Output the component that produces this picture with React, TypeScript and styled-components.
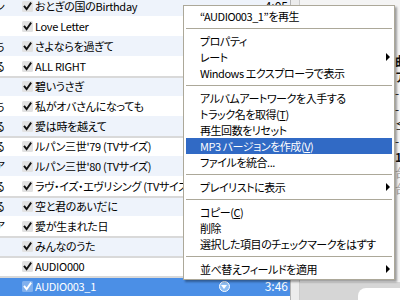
import React from "react";
import styled, { createGlobalStyle, css } from "styled-components";

const GlobalStyle = createGlobalStyle`
  html, body {
    margin: 0;
    padding: 0;
  }
  body {
    width: 400px;
    height: 300px;
    overflow: hidden;
    background: #ffffff;
    font-family: "Noto Sans CJK JP", "Liberation Sans", sans-serif;
  }
`;

const Window = styled.div`
  position: relative;
  width: 400px;
  height: 300px;
  display: flex;
  overflow: hidden;
  background: #ffffff;
`;

const TrackList = styled.div`
  width: 290px;
  height: 300px;
  flex-shrink: 0;
  overflow: hidden;
  background: #ffffff;
`;

const Rows = styled.div`
  margin-top: -4px;
  display: flex;
  flex-direction: column;
`;

const Row = styled.div<{ $striped?: boolean; $groupStart?: boolean; $selected?: boolean }>`
  height: 20px;
  flex-shrink: 0;
  display: grid;
  grid-template-columns: 5px 17px 13px 148px 30px 22px 53px 2px;
  align-items: center;
  font-size: 11px;
  letter-spacing: -0.3px;
  line-height: 16px;
  color: #000000;
  background: ${(p) => (p.$striped ? "#eef3fb" : "#ffffff")};
  box-shadow: ${(p) => (p.$groupStart ? "inset 0 2px 0 #d9d9d9" : "none")};

  ${(p) =>
    p.$selected &&
    css`
      background: #4b8fe6;
      color: #ffffff;
    `}
`;

const LeadCell = styled.div`
  display: flex;
  justify-content: flex-end;
  overflow: hidden;
  white-space: nowrap;
`;

const CheckCell = styled.div`
  grid-column: 3;
  display: flex;
  align-items: center;
`;

const Title = styled.div`
  overflow: hidden;
  white-space: nowrap;
  font-feature-settings: "palt";
`;

const ArrowButton = styled.span`
  grid-column: 6;
  justify-self: center;
  width: 11px;
  height: 11px;
  box-sizing: border-box;
  border-radius: 50%;
  border: 1px solid #ffffff;
  background: #8dbdf2;
  display: flex;
  align-items: center;
  justify-content: center;

  &::after {
    content: "";
    margin-top: 1px;
    border-left: 3px solid transparent;
    border-right: 3px solid transparent;
    border-top: 4px solid #ffffff;
  }
`;

const Time = styled.div`
  grid-column: 7;
  text-align: right;
  white-space: nowrap;
  font-size: 12px;
  letter-spacing: 0;
`;

const Splitter = styled.div`
  width: 8px;
  flex-shrink: 0;
  background: #ececec;
  border-left: 1px solid #b4b4b4;
  border-right: 1px solid #cdcdcd;
`;

const SidePanel = styled.div`
  flex: 1;
  display: flex;
  flex-direction: column;
  background: #f4f4f4;
`;

const SideContent = styled.div`
  flex: 1;
  padding: 54px 0 0 95px;
  display: flex;
  flex-direction: column;
  gap: 3px;
  font-size: 12px;
  line-height: 13px;
  white-space: nowrap;
`;

const SideLine = styled.div<{ $bold?: boolean; $muted?: boolean }>`
  font-weight: ${(p) => (p.$bold ? 700 : 400)};
  color: ${(p) => (p.$muted ? "#a8a8a8" : "#111111")};
`;

const SideFooter = styled.div`
  height: 18px;
  padding: 6px 0 0 58px;
  box-sizing: border-box;
  background: #d6d6d6;
`;

const SearchPill = styled.div`
  width: 60px;
  height: 20px;
  background: #ffffff;
  border-radius: 8px 0 0 0;
`;

const Menu = styled.div`
  position: absolute;
  left: 183px;
  top: 5px;
  width: 212px;
  box-sizing: border-box;
  padding: 2px;
  border: 1px solid #aca899;
  background: #ffffff;
  box-shadow: 2px 2px 2px rgba(0, 0, 0, 0.35);
  font-size: 11px;
  letter-spacing: -0.45px;
  line-height: 1;
  color: #000000;
`;

const MenuItem = styled.div<{ $active?: boolean }>`
  height: 16px;
  display: flex;
  align-items: center;
  padding: 0 2px 0 14px;
  white-space: nowrap;
  font-feature-settings: "palt";

  ${(p) =>
    p.$active &&
    css`
      background: #316ac5;
      color: #ffffff;
    `}
`;

const SubArrow = styled.span`
  margin-left: auto;
  width: 0;
  height: 0;
  border-left: 4px solid #000000;
  border-top: 4px solid transparent;
  border-bottom: 4px solid transparent;
`;

const Separator = styled.div`
  height: 9px;
  display: flex;
  align-items: center;

  &::before {
    content: "";
    flex: 1;
    height: 1px;
    background: #aca899;
  }
`;

const CheckBox = ({ selected }: { selected?: boolean }) => (
  <svg width="11" height="11" viewBox="0 0 11 11">
    <rect
      x="0"
      y="0"
      width="11"
      height="11"
      rx="1.5"
      fill={selected ? "rgba(255,255,255,0.3)" : "#e2e2e2"}
    />
    <path
      d="M2.6 5.6 L4.6 8.2 L8.6 2.4"
      fill="none"
      stroke={selected ? "#ffffff" : "#111111"}
      strokeWidth="1.9"
      strokeLinecap="square"
    />
  </svg>
);

const tracks = [
  { lead: "ン", title: "おとぎの国のBirthday", time: "4:05" },
  { lead: "", title: "Love Letter" },
  { lead: "ち", title: "さよならを過ぎて" },
  { lead: "る", title: "ALL RIGHT" },
  { lead: "", title: "碧いうさぎ", group: true },
  { lead: "ち", title: "私がオバさんになっても" },
  { lead: "る", title: "愛は時を越えて" },
  { lead: "る", title: "ルパン三世'79 (TVサイズ)", group: true },
  { lead: "ア", title: "ルパン三世'80 (TVサイズ)" },
  { lead: "る", title: "ラヴ・イズ・エヴリシング (TVサイズ)" },
  { lead: "る", title: "空と君のあいだに", group: true },
  { lead: "ア", title: "愛が生まれた日" },
  { lead: "", title: "みんなのうた", group: true },
  { lead: "", title: "AUDIO000", group: true },
  { lead: "", title: "AUDIO003_1", time: "3:46", group: true, selected: true },
];

type MenuEntry =
  | { sep: true }
  | { label: React.ReactNode; sub?: boolean; active?: boolean };

const menu: MenuEntry[] = [
  { label: "“AUDIO003_1”を再生" },
  { sep: true },
  { label: "プロパティ" },
  { label: "レート", sub: true },
  { label: "Windows エクスプローラで表示" },
  { sep: true },
  { label: "アルバムアートワークを入手する" },
  { label: <>トラック名を取得(<u>T</u>)</> },
  { label: "再生回数をリセット" },
  { label: <>MP3 バージョンを作成(<u>V</u>)</>, active: true },
  { label: "ファイルを統合..." },
  { sep: true },
  { label: "プレイリストに表示", sub: true },
  { sep: true },
  { label: <>コピー(<u>C</u>)</> },
  { label: "削除" },
  { label: "選択した項目のチェックマークをはずす" },
  { sep: true },
  { label: "並べ替えフィールドを適用", sub: true },
];

const App = () => {
  return (
    <Window>
      <GlobalStyle />
      <TrackList>
        <Rows>
          {tracks.map((t, i) => (
            <Row
              key={i}
              $striped={i % 2 === 0}
              $groupStart={t.group}
              $selected={t.selected}
            >
              <LeadCell>
                <span>{t.lead}</span>
              </LeadCell>
              <CheckCell>
                <CheckBox selected={t.selected} />
              </CheckCell>
              <Title>{t.title}</Title>
              {t.selected && <ArrowButton />}
              {t.time && <Time>{t.time}</Time>}
            </Row>
          ))}
        </Rows>
      </TrackList>
      <Splitter />
      <SidePanel>
        <SideContent>
          <SideLine $bold>曲名</SideLine>
          <SideLine $bold>アル</SideLine>
          <SideLine>- </SideLine>
          <SideLine>-</SideLine>
          <SideLine>≤</SideLine>
          <SideLine>-</SideLine>
          <SideLine $bold>1</SideLine>
          <SideLine $muted>台</SideLine>
          <SideLine $muted>台</SideLine>
        </SideContent>
        <SideFooter>
          <SearchPill />
        </SideFooter>
      </SidePanel>

      <Menu>
        {menu.map((m, i) =>
          "sep" in m ? (
            <Separator key={i} />
          ) : (
            <MenuItem key={i} $active={m.active}>
              <span>{m.label}</span>
              {m.sub && <SubArrow />}
            </MenuItem>
          )
        )}
      </Menu>
    </Window>
  );
};

export default App;
